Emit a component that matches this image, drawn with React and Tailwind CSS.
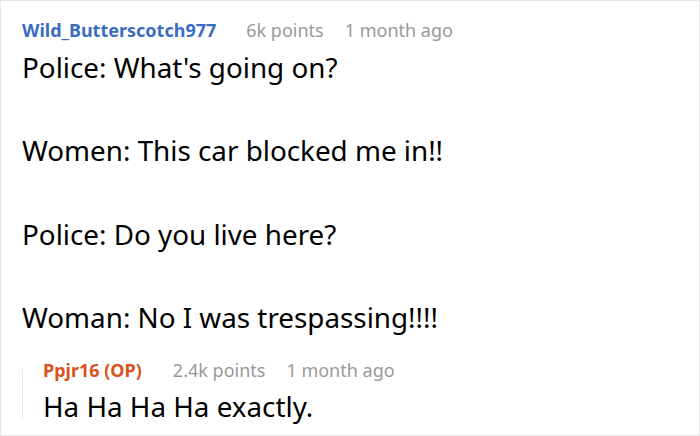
import React from "react";

const lines = [
  "Police: What's going on?",
  "Women: This car blocked me in!!",
  "Police: Do you live here?",
  "Woman: No I was trespassing!!!!",
];

const Meta = ({ name, color, points, time, gap = "ml-[31px]" }) => (
  <div className="flex items-baseline text-[18px] leading-[24px]">
    <span className={`font-bold ${color}`}>{name}</span>
    <span className={`${gap} text-[#999999]`}>{points}</span>
    <span className="ml-[21px] text-[#999999]">{time}</span>
  </div>
);

export default function App() {
  return (
    <div
      className="w-[700px] h-[436px] overflow-hidden border border-[#e6e6e6] bg-white pl-[21px] pt-[17px] text-black"
      style={{ fontFamily: '"Noto Sans", "DejaVu Sans", sans-serif' }}
    >
      <Meta
        name="Wild_Butterscotch977"
        color="text-[#3a6cbf]"
        points="6k points"
        time="1 month ago"
        gap="ml-[30px]"
      />
      <div className="mt-[5px] text-[27.8px] leading-[41.7px]">
        {lines.map((line, i) => (
          <div key={i} className={i > 0 ? "mt-[41.7px]" : ""}>
            {line}
          </div>
        ))}
      </div>
      <div className="relative mt-[19px] pl-[21px]">
        <span className="absolute left-0 top-[11px] bottom-[1px] w-px bg-[#e6e6e6]" />
        <Meta
          name="Ppjr16 (OP)"
          color="text-[#d9531e]"
          points="2.4k points"
          time="1 month ago"
        />
        <div className="mt-[10px] text-[27.8px] leading-[28px]">
          Ha Ha Ha Ha exactly.
        </div>
      </div>
    </div>
  );
}
